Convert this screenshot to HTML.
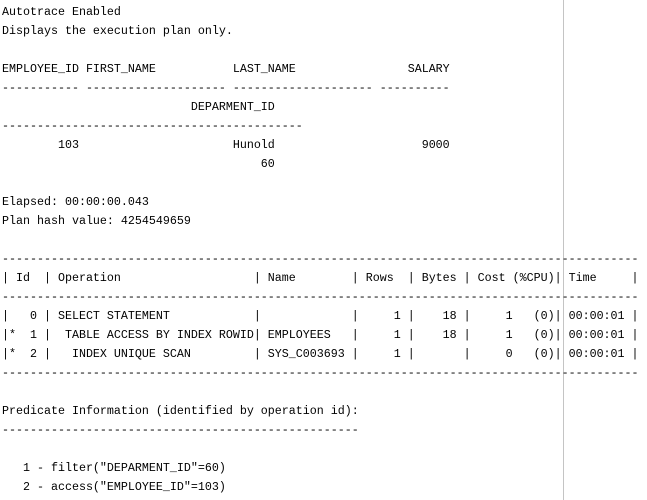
<!DOCTYPE html>
<html><head><meta charset="utf-8"><style>
html,body{margin:0;padding:0;background:#fff;width:647px;height:500px;overflow:hidden;position:relative}
pre{position:absolute;left:2px;top:3px;margin:0;font-family:"Liberation Mono",monospace;font-size:11.67px;line-height:19px;color:#000}
.v{position:absolute;left:563px;top:0;width:1px;height:500px;background:#c4c4c4}
</style></head><body>
<div class="v"></div>
<pre>Autotrace Enabled
Displays the execution plan only.

EMPLOYEE_ID FIRST_NAME           LAST_NAME                SALARY
----------- -------------------- -------------------- ----------
                           DEPARMENT_ID
-------------------------------------------
        103                      Hunold                     9000
                                     60

Elapsed: 00:00:00.043
Plan hash value: 4254549659

-------------------------------------------------------------------------------------------
| Id  | Operation                   | Name        | Rows  | Bytes | Cost (%CPU)| Time     |
-------------------------------------------------------------------------------------------
|   0 | SELECT STATEMENT            |             |     1 |    18 |     1   (0)| 00:00:01 |
|*  1 |  TABLE ACCESS BY INDEX ROWID| EMPLOYEES   |     1 |    18 |     1   (0)| 00:00:01 |
|*  2 |   INDEX UNIQUE SCAN         | SYS_C003693 |     1 |       |     0   (0)| 00:00:01 |
-------------------------------------------------------------------------------------------

Predicate Information (identified by operation id):
---------------------------------------------------

   1 - filter("DEPARMENT_ID"=60)
   2 - access("EMPLOYEE_ID"=103)</pre>
</body></html>
